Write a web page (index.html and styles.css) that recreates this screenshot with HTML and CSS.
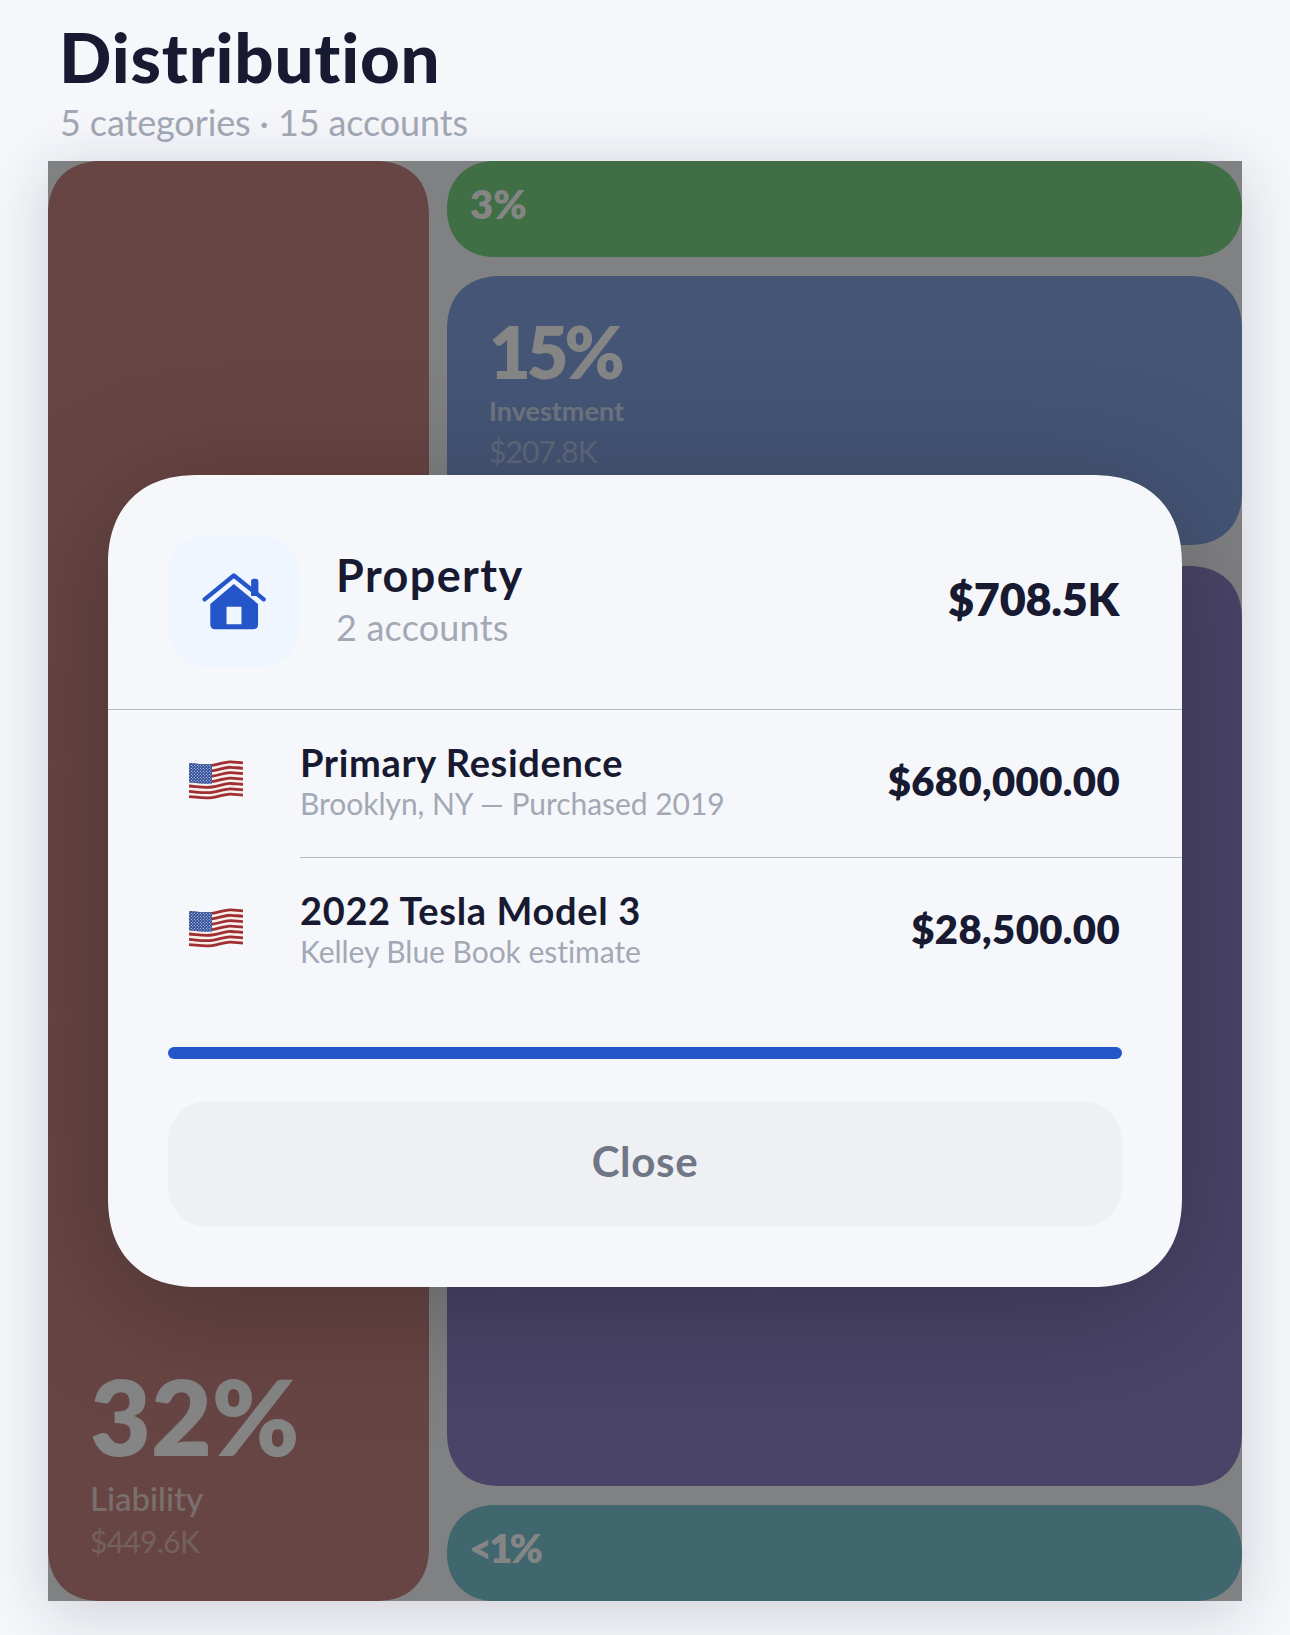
FILE: index.html
```html
<!DOCTYPE html>
<html lang="en">
<head>
<meta charset="utf-8">
<title>Distribution</title>
<link rel="stylesheet" href="styles.css">
</head>
<body>
<main class="page">
  <header class="head">
    <h1 class="title">Distribution</h1>
    <p class="subtitle">5 categories · 15 accounts</p>
  </header>
  <section class="grid">
    <div class="tile tile-red">
      <div class="pct pct-xl">32%</div>
      <div class="label label-xl">Liability</div>
      <div class="value value-xl">$449.6K</div>
    </div>
    <div class="column">
      <div class="tile tile-green tile-pill"><div class="pct pct-sm">3%</div></div>
      <div class="tile tile-blue">
        <div class="pct pct-md">15%</div>
        <div class="label">Investment</div>
        <div class="value">$207.8K</div>
      </div>
      <div class="tile tile-purple"></div>
      <div class="tile tile-teal tile-pill"><div class="pct pct-sm pct-tight">&lt;1%</div></div>
    </div>
    <div class="overlay">
      <div class="modal">
        <div class="modal-head">
          <div class="icon-box">
            <svg class="house" viewBox="120 125 205 180" aria-hidden="true">
              <path class="house-roof" d="M134 210L222 138L312 210"/>
              <path class="house-fill" d="M274 156q0-8 8-8h6q8 0 8 8v44h-22z"/>
              <path class="house-fill" fill-rule="evenodd" d="M222 164L295 224V285Q295 300 280 300H166Q151 300 151 285V224ZM200 232V285H245V232Z"/>
            </svg>
          </div>
          <div class="head-text">
            <div class="cat-name">Property</div>
            <div class="cat-sub">2 accounts</div>
          </div>
          <div class="cat-total">$708.5K</div>
        </div>
        <div class="row row-first">
          <svg class="flag" viewBox="0 0 54 40" aria-hidden="true"><use href="#us-flag"/></svg>
          <div class="row-text">
            <div class="row-name">Primary Residence</div>
            <div class="row-sub">Brooklyn, NY — Purchased 2019</div>
          </div>
          <div class="row-amount">$680,000.00</div>
        </div>
        <div class="row">
          <svg class="flag" viewBox="0 0 54 40" aria-hidden="true"><use href="#us-flag"/></svg>
          <div class="row-text">
            <div class="row-name">2022 Tesla Model 3</div>
            <div class="row-sub">Kelley Blue Book estimate</div>
          </div>
          <div class="row-amount">$28,500.00</div>
        </div>
        <div class="bar"></div>
        <button class="close" type="button">Close</button>
      </div>
    </div>
  </section>
</main>
<svg class="defs" aria-hidden="true">
  <defs>
    <pattern id="stars" width="3" height="3" patternUnits="userSpaceOnUse">
      <circle cx=".8" cy=".8" r=".6" fill="#dfe5f3"/>
      <circle cx="2.300" cy="2.300" r=".6" fill="#dfe5f3"/>
    </pattern>
    <path id="stripe" d="M0 3C8 3.500 15 5 23 4C31 3 36 0 42 .5C47 1 51 1 54 1.500"/>
    <symbol id="us-flag" viewBox="0 0 54 40">
      <path fill="#f6efec" d="M0 3C8 3.500 15 5 23 4C31 3 36 0 42 .5C47 1 51 1 54 1.500V36.500C51 36 47 36 42 35.500C36 35 31 38 23 39C15 40 8 38.500 0 38Z"/>
      <g fill="none" stroke="#a02f33" stroke-width="2.800">
        <use href="#stripe" y="1.400"/>
        <use href="#stripe" y="6.800"/>
        <use href="#stripe" y="12.200"/>
        <use href="#stripe" y="17.600"/>
        <use href="#stripe" y="23"/>
        <use href="#stripe" y="28.400"/>
        <use href="#stripe" y="33.600"/>
      </g>
      <path fill="#2c4a96" d="M0 3C8 3.500 15 5 23 4V23.500C15 24.500 8 23 0 22.500Z"/>
      <path fill="url(#stars)" d="M0 3C8 3.500 15 5 23 4V23.500C15 24.500 8 23 0 22.500Z"/>
    </symbol>
  </defs>
</svg>
</body>
</html>
```

FILE: styles.css
```css
* { box-sizing: border-box; }
html, body { margin: 0; padding: 0; }
body {
  width: 1290px;
  height: 1635px;
  overflow: hidden;
  background: #f6f7fb;
  font-family: Lato, "Open Sans", sans-serif;
  font-variant-ligatures: none;
  color: #171a30;
}
.page { padding: 0 48px; }
.head { height: 161px; padding: 18px 0 0 11px; }
.title { margin: 0; font-size: 69px; line-height: 78px; font-weight: 900; letter-spacing: .8px; color: #171a30; }
.subtitle { margin: 5px 0 0 1px; font-size: 36px; line-height: 42px; color: #a3a8b5; letter-spacing: -.12px; }
.grid {
  position: relative;
  display: flex;
  gap: 18px;
  height: 1440px;
  overflow: hidden;
  background: #f6f7fb;
  box-shadow: 0 10px 60px rgba(20, 25, 45, .18);
}
.column { flex: 1; display: flex; flex-direction: column; gap: 19px; }
.tile { border-radius: 54px; corner-shape: superellipse(1.2); padding: 39px 42px; color: #fff; }
.tile-red {
  width: 381px;
  display: flex;
  flex-direction: column;
  justify-content: flex-end;
  padding: 42px 42px 39px;
  background: #c68583;
}
.tile-green { background: #7bd385; }
.tile-blue { height: 269px; background: #83a3e1; }
.tile-purple { flex: 1; margin-top: 2px; background: #8e83c8; }
.tile-teal { background: #7bc4d4; }
.tile-pill { height: 96px; border-radius: 48px; corner-shape: superellipse(1.12); padding: 0 24px 10px 23px; display: flex; align-items: center; }
.pct { font-weight: 800; line-height: 1; }
.pct-xl { font-size: 105px; }
.pct-md { font-size: 72px; letter-spacing: -4px; }
.pct-sm { font-size: 40px; }
.pct-tight { letter-spacing: -3px; margin-left: -1px; }
.label { margin-top: 6px; font-size: 27px; line-height: 36px; font-weight: 700; opacity: .66; }
.value { margin-top: 4px; font-size: 30px; line-height: 36px; opacity: .42; letter-spacing: -.9px; }
.label-xl { margin-top: 9px; font-size: 33px; line-height: 42px; font-weight: 500; letter-spacing: 0; }
.value-xl { margin-top: 1px; font-size: 30px; line-height: 42px; letter-spacing: -.7px; }
.overlay {
  position: absolute;
  inset: 0;
  display: flex;
  align-items: center;
  justify-content: center;
  background: rgba(0, 0, 0, .48);
}
.modal {
  width: 1074px;
  height: 812px;
  padding: 60px 0;
  border-radius: 90px;
  corner-shape: superellipse(1.2);
  background: #f6f7fb;
  box-shadow: 0 20px 130px rgba(0, 0, 0, .26);
}
.modal-head { display: flex; align-items: center; padding: 0 60px 42px; border-bottom: 1px solid #b6b9c1; }
.icon-box {
  width: 132px;
  height: 132px;
  border-radius: 44px;
  corner-shape: superellipse(1.2);
  background: #f0f6ff;
  display: flex;
  align-items: center;
  justify-content: center;
}
.house { width: 68px; height: 60px; }
.house-roof { fill: none; stroke: #2456c9; stroke-width: 13; stroke-linecap: round; stroke-linejoin: round; }
.house-fill { fill: #2456c9; }
.head-text { flex: 1; margin-left: 36px; position: relative; top: -3px; }
.cat-name { font-size: 45px; line-height: 56px; font-weight: 700; letter-spacing: 1.4px; }
.cat-sub { margin-top: 2px; font-size: 36px; line-height: 44px; color: #a3a8b5; letter-spacing: .2px; }
.cat-total { font-size: 45px; font-weight: 800; letter-spacing: -.3px; margin-right: 3px; position: relative; top: -2px; }
.row { display: flex; align-items: center; height: 148px; padding: 0 60px 6px 0; border-top: 1px solid #b6b9c1; margin-left: 192px; position: relative; }
.row-first { border-top: 0; height: 147px; }
.flag { position: absolute; left: -111px; top: 50px; width: 54px; height: 40px; }
.row-text { flex: 1; }
.row-name { font-size: 38px; line-height: 44px; font-weight: 700; letter-spacing: .65px; }
.row-sub { margin-top: 1px; font-size: 30px; line-height: 36px; color: #a3a8b5; letter-spacing: -.04px; }
.row-amount { font-size: 40px; font-weight: 800; letter-spacing: .4px; margin-right: 2px; }
.bar { height: 12px; margin: 42px 60px 0; border-radius: 6px; background: #2456c9; }
.close {
  display: block;
  width: 954px;
  height: 126px;
  margin: 42px 60px 0;
  padding: 0 0 6px;
  border: 0;
  border-radius: 44px;
  corner-shape: superellipse(1.2);
  background: #eff0f4;
  font-family: inherit;
  font-size: 42px;
  font-weight: 700;
  letter-spacing: .7px;
  color: #6f7685;
}
.defs { position: absolute; width: 0; height: 0; }
```
